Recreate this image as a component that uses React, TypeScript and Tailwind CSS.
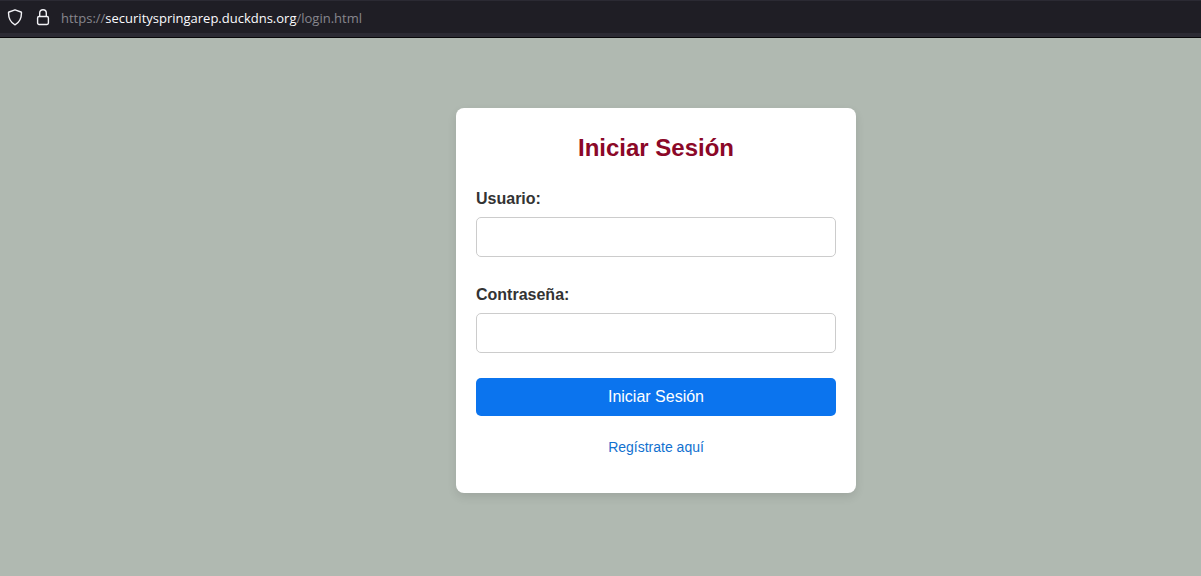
import React from "react";

function AddressBar() {
  return (
    <header className="flex h-[38px] items-center border-t border-b border-t-[#2b2a33] border-b-[#08080a] bg-[#1f1e25] shadow-[inset_0_-4px_0_#2b2a33]">
      <div className="flex items-center gap-[13px] pb-[2px] pl-[7px]">
        <svg width="16" height="18" viewBox="0 0 16 18" fill="none" stroke="#f2f2f6" strokeWidth="1.4" strokeLinejoin="round" aria-hidden="true">
          <path d="M8 0.8 L14 3 Q14.5 3.2 14.5 3.8 C14.5 9.4 12.6 13.4 8 15.8 C3.4 13.4 1.5 9.4 1.5 3.8 Q1.5 3.2 2 3 Z" />
        </svg>
        <svg width="14" height="18" viewBox="0 0 14 18" fill="none" stroke="#f2f2f6" strokeWidth="1.4" aria-hidden="true">
          <rect x="1.6" y="7.5" width="10.8" height="8" rx="1.4" />
          <path d="M3.7 7.4 V4 C3.7 1.9 5 0.8 7 0.8 C9 0.8 10.3 1.9 10.3 4 V7.4" />
        </svg>
      </div>
      <p className="pb-[2px] pl-[11px] font-['Open_Sans','Noto_Sans',sans-serif] text-[13px] leading-[18px] whitespace-nowrap text-[#87868d]">
        https://<span className="text-[#fbfbfe]">securityspringarep.duckdns.org</span>/login.html
      </p>
    </header>
  );
}

function Field({ id, label, type }: { id: string; label: string; type: string }) {
  return (
    <div className="mb-[25px]">
      <label htmlFor={id} className="mb-[5px] block text-base leading-[26px] font-bold text-[#333333]">
        {label}
      </label>
      <input
        id={id}
        name={id}
        type={type}
        className="block h-10 w-full rounded-[5px] border border-[#cccccc] bg-white px-[10px] text-base outline-none focus:border-[#0b74ee]"
      />
    </div>
  );
}

export default function App() {
  return (
    <div className="flex min-h-screen flex-col bg-[#b0b9b1] font-['Liberation_Sans',Arial,sans-serif]">
      <AddressBar />
      <main className="flex flex-1 items-start justify-center pt-[70px] pb-5 pl-[111px]">
        <section className="w-full max-w-[400px] rounded-lg bg-white px-5 pt-5 pb-[35px] shadow-[0_4px_10px_rgba(0,0,0,0.1)]">
          <h1 className="mb-[18px] text-center text-2xl leading-10 font-bold text-[#8b0828]">Iniciar Sesión</h1>
          <form onSubmit={(e: React.FormEvent) => e.preventDefault()}>
            <Field id="username" label="Usuario:" type="text" />
            <Field id="password" label="Contraseña:" type="password" />
            <button
              type="submit"
              className="block h-[38px] w-full cursor-pointer rounded-[5px] bg-[#0b74ee] text-base text-white"
            >
              Iniciar Sesión
            </button>
          </form>
          <p className="mt-5 text-center text-sm leading-[22px]">
            <a href="#registro" className="text-[#1271cf]">
              Regístrate aquí
            </a>
          </p>
        </section>
      </main>
    </div>
  );
}
